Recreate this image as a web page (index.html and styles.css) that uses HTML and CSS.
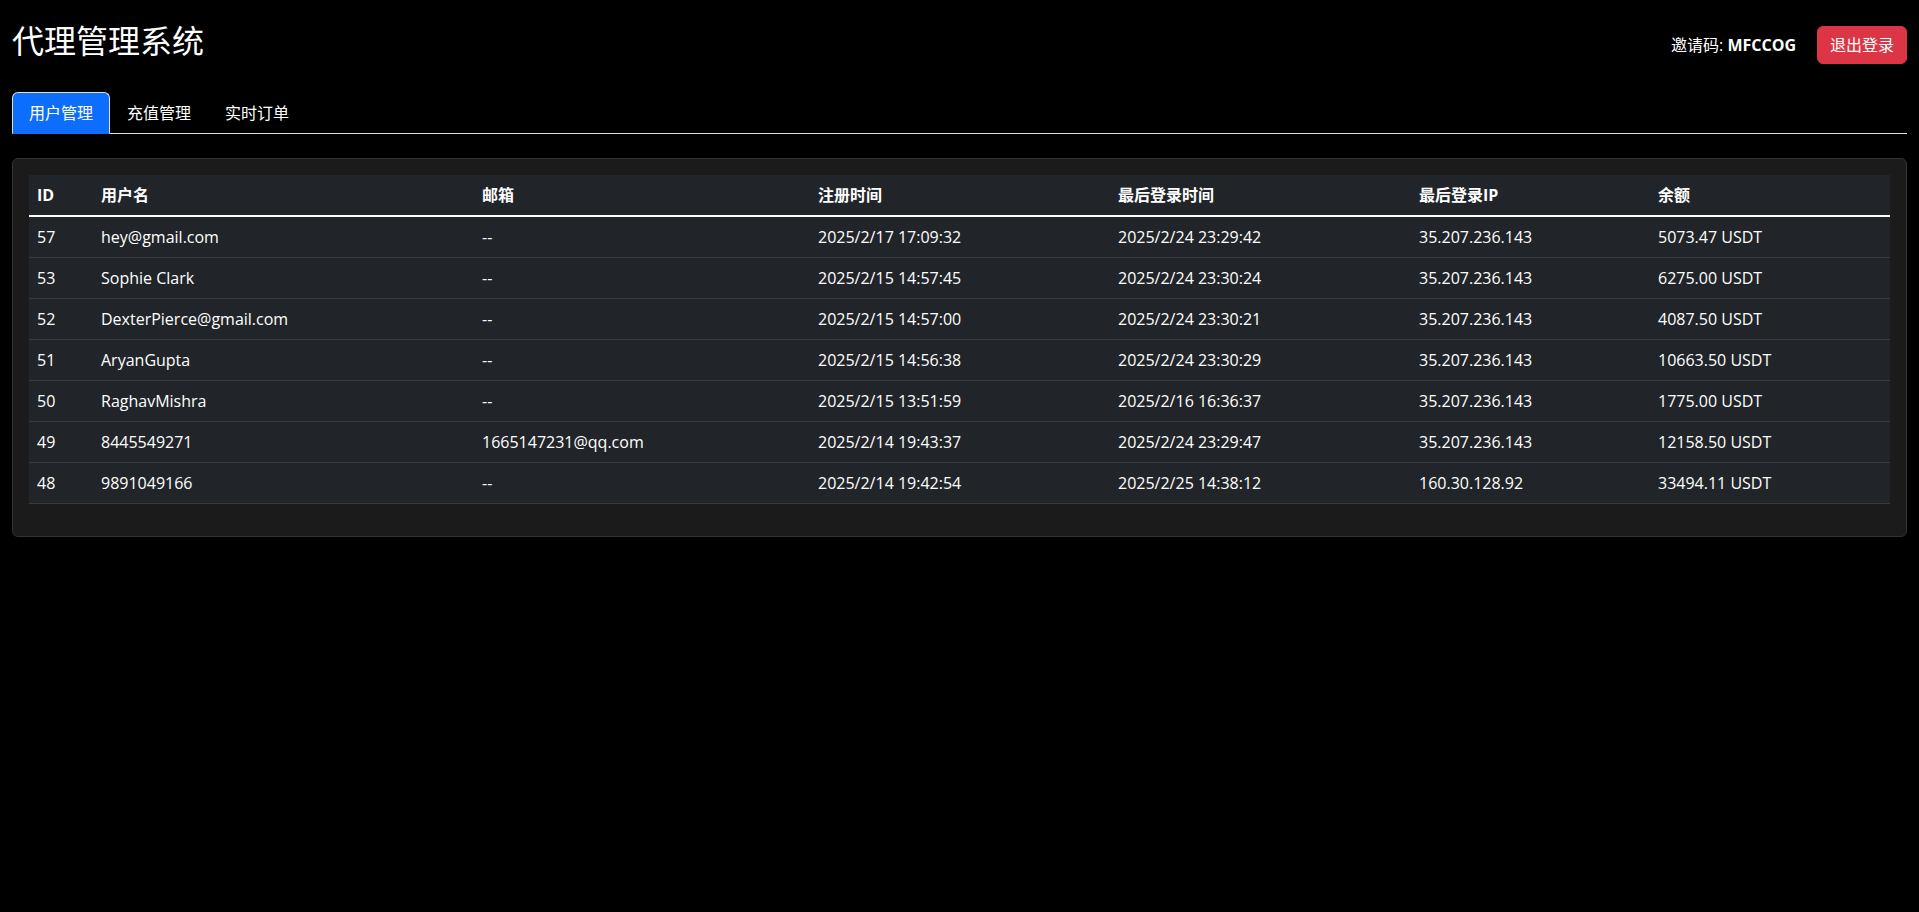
FILE: index.html
```html
<!DOCTYPE html>
<html lang="zh-CN">

<head>
    <meta charset="UTF-8">
    <meta name="viewport" content="width=device-width, initial-scale=1.0">
    <title>代理管理系统</title>
    <link rel="stylesheet" href="styles.css">
</head>

<body>
    <div class="container">
        <div class="header">
            <h2 class="title">代理管理系统</h2>
            <div class="header-right">
                <span class="invite">邀请码: <strong>MFCCOG</strong></span>
                <button class="btn-logout">退出登录</button>
            </div>
        </div>

        <ul class="nav-tabs">
            <li><a class="nav-link active" href="#">用户管理</a></li>
            <li><a class="nav-link" href="#">充值管理</a></li>
            <li><a class="nav-link" href="#">实时订单</a></li>
        </ul>

        <div class="card">
            <table class="users">
                <thead>
                    <tr>
                        <th class="col-id">ID</th>
                        <th class="col-name">用户名</th>
                        <th class="col-mail">邮箱</th>
                        <th class="col-reg">注册时间</th>
                        <th class="col-login">最后登录时间</th>
                        <th class="col-ip">最后登录IP</th>
                        <th class="col-balance">余额</th>
                    </tr>
                </thead>
                <tbody>
                    <tr>
                        <td>57</td>
                        <td>hey@gmail.com</td>
                        <td>--</td>
                        <td>2025/2/17 17:09:32</td>
                        <td>2025/2/24 23:29:42</td>
                        <td>35.207.236.143</td>
                        <td>5073.47 USDT</td>
                    </tr>
                    <tr>
                        <td>53</td>
                        <td>Sophie Clark</td>
                        <td>--</td>
                        <td>2025/2/15 14:57:45</td>
                        <td>2025/2/24 23:30:24</td>
                        <td>35.207.236.143</td>
                        <td>6275.00 USDT</td>
                    </tr>
                    <tr>
                        <td>52</td>
                        <td>DexterPierce@gmail.com</td>
                        <td>--</td>
                        <td>2025/2/15 14:57:00</td>
                        <td>2025/2/24 23:30:21</td>
                        <td>35.207.236.143</td>
                        <td>4087.50 USDT</td>
                    </tr>
                    <tr>
                        <td>51</td>
                        <td>AryanGupta</td>
                        <td>--</td>
                        <td>2025/2/15 14:56:38</td>
                        <td>2025/2/24 23:30:29</td>
                        <td>35.207.236.143</td>
                        <td>10663.50 USDT</td>
                    </tr>
                    <tr>
                        <td>50</td>
                        <td>RaghavMishra</td>
                        <td>--</td>
                        <td>2025/2/15 13:51:59</td>
                        <td>2025/2/16 16:36:37</td>
                        <td>35.207.236.143</td>
                        <td>1775.00 USDT</td>
                    </tr>
                    <tr>
                        <td>49</td>
                        <td>8445549271</td>
                        <td>1665147231@qq.com</td>
                        <td>2025/2/14 19:43:37</td>
                        <td>2025/2/24 23:29:47</td>
                        <td>35.207.236.143</td>
                        <td>12158.50 USDT</td>
                    </tr>
                    <tr>
                        <td>48</td>
                        <td>9891049166</td>
                        <td>--</td>
                        <td>2025/2/14 19:42:54</td>
                        <td>2025/2/25 14:38:12</td>
                        <td>160.30.128.92</td>
                        <td>33494.11 USDT</td>
                    </tr>
                </tbody>
            </table>
        </div>
    </div>
</body>

</html>
```

FILE: styles.css
```css
/* Estilos generales */
body {
    margin: 0;
    background-color: #000;
    color: #fff;
    font-family: "Open Sans", "Noto Sans CJK SC", sans-serif;
    font-size: 16px;
    line-height: 1.5;
}

.container {
    padding: 22px 12px 0;
}

/* Cabecera */
.header {
    display: flex;
    justify-content: space-between;
    align-items: center;
    margin-bottom: 24px;
}

.title {
    margin: 0 0 8px;
    font-size: 32px;
    font-weight: 400;
    line-height: 1.2;
}

.header-right {
    display: flex;
    align-items: center;
}

.invite {
    margin-right: 21px;
}

.btn-logout {
    font-family: inherit;
    font-size: 16px;
    line-height: 1.5;
    color: #fff;
    background-color: #dc3545;
    border: 1px solid #dc3545;
    border-radius: 6px;
    padding: 6px 12px;
    cursor: pointer;
}

/* Pestañas */
.nav-tabs {
    display: flex;
    list-style: none;
    margin: 0;
    padding: 0;
    border-bottom: 1px solid #dee2e6;
}

.nav-link {
    display: block;
    margin-bottom: -1px;
    padding: 8px 16px;
    color: #fff;
    text-decoration: none;
    border: 1px solid transparent;
    border-radius: 6px 6px 0 0;
}

.nav-link.active {
    background-color: #0d6efd;
    border-color: #dee2e6 #dee2e6 #0d6efd;
}

/* Tarjeta y tabla */
.card {
    margin-top: 24px;
    padding: 16px;
    background-color: #1b1b1b;
    border: 1px solid #333;
    border-radius: 6px;
}

.users {
    width: 100%;
    table-layout: fixed;
    border-collapse: collapse;
    margin-bottom: 16px;
    background-color: #212529;
    color: #fff;
}

.users th,
.users td {
    padding: 8px;
    text-align: left;
    vertical-align: top;
    white-space: nowrap;
}

.users th {
    font-weight: 700;
}

.users thead tr {
    border-bottom: 2px solid #fff;
}

.users tbody tr {
    border-bottom: 1px solid #373b3e;
}

.col-id { width: 48px; }
.col-name { width: 365px; }
.col-mail { width: 320px; }
.col-reg { width: 284px; }
.col-login { width: 285px; }
.col-ip { width: 223px; }
```
